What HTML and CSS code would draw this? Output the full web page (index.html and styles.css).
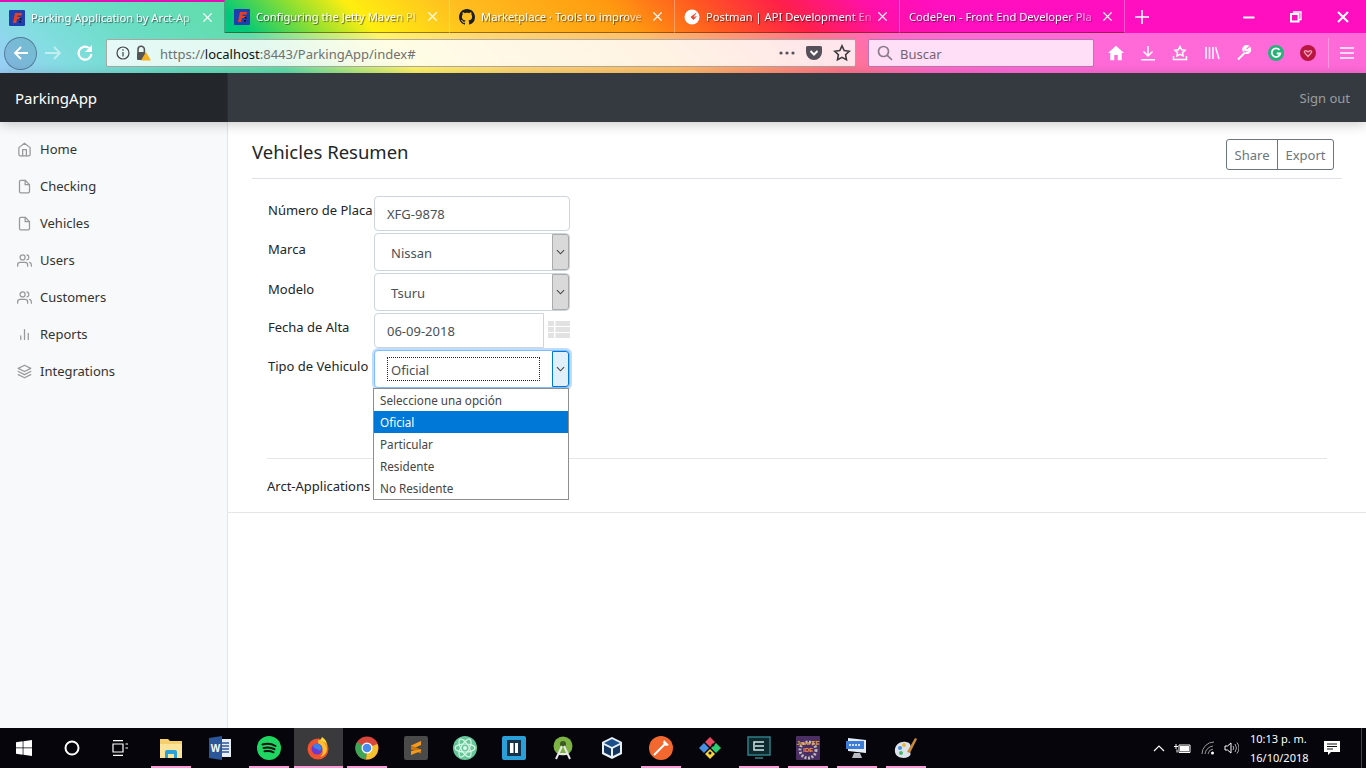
FILE: index.html
```html
<!DOCTYPE html>
<html lang="es">
<head>
<meta charset="utf-8">
<title>Parking Application by Arct-Applications</title>
<link rel="stylesheet" href="styles.css">
</head>
<body>
<header class="browser">
  <div class="tabstrip">
    <div class="tab tab-active">
      <svg class="favicon" viewBox="0 0 16 16"><rect width="16" height="16" rx="1" fill="#1f3fb0"/><path d="M4 13 6 3h7l-.5 2.500H8.600l-.3 1.600h3.200l-.4 2H7.900L7.200 13z" fill="#e8401f"/><path d="M10.500 8h2v1.500h-2zM10 11h2v1.500h-2z" fill="#111"/></svg>
      <span class="tab-title">Parking Application by Arct-Ap</span>
      <svg class="tab-close" viewBox="0 0 12 12"><path d="M1.500 1.500l9 9M10.500 1.500l-9 9"/></svg>
    </div>
    <div class="tab">
      <svg class="favicon" viewBox="0 0 16 16"><rect width="16" height="16" rx="1" fill="#1f3fb0"/><path d="M4 13 6 3h7l-.5 2.500H8.600l-.3 1.600h3.200l-.4 2H7.900L7.200 13z" fill="#e8401f"/><path d="M10.500 8h2v1.500h-2zM10 11h2v1.500h-2z" fill="#111"/></svg>
      <span class="tab-title">Configuring the Jetty Maven Pl</span>
      <svg class="tab-close" viewBox="0 0 12 12"><path d="M1.500 1.500l9 9M10.500 1.500l-9 9"/></svg>
    </div>
    <div class="tab">
      <svg class="favicon" viewBox="0 0 16 16"><path fill="#1b1f23" d="M8 0C3.580 0 0 3.580 0 8c0 3.540 2.290 6.530 5.470 7.590.4.070.55-.17.55-.38 0-.19-.01-.82-.01-1.490-2.010.37-2.530-.49-2.690-.94-.09-.23-.48-.94-.82-1.130-.28-.15-.68-.52-.01-.53.63-.01 1.080.58 1.230.82.72 1.210 1.870.87 2.330.66.07-.52.28-.87.51-1.070-1.780-.2-3.640-.89-3.640-3.950 0-.87.31-1.590.82-2.150-.08-.2-.36-1.020.08-2.120 0 0 .67-.21 2.200.82.64-.18 1.320-.27 2-.27.68 0 1.360.09 2 .27 1.530-1.040 2.200-.82 2.200-.82.44 1.100.16 1.920.08 2.120.51.56.82 1.270.82 2.150 0 3.070-1.870 3.750-3.650 3.950.29.25.54.73.54 1.480 0 1.070-.01 1.930-.01 2.200 0 .21.15.46.55.38A8.013 8.013 0 0016 8c0-4.420-3.580-8-8-8z"/></svg>
      <span class="tab-title">Marketplace · Tools to improve</span>
      <svg class="tab-close" viewBox="0 0 12 12"><path d="M1.500 1.500l9 9M10.500 1.500l-9 9"/></svg>
    </div>
    <div class="tab">
      <svg class="favicon" viewBox="0 0 16 16"><circle cx="8" cy="8" r="7.500" fill="#fff"/><path d="M13 3 6.500 8 9.500 11 13 7 9.500 8z" fill="#f0452f"/></svg>
      <span class="tab-title">Postman | API Development En</span>
      <svg class="tab-close" viewBox="0 0 12 12"><path d="M1.500 1.500l9 9M10.500 1.500l-9 9"/></svg>
    </div>
    <div class="tab tab-nofav">
      <span class="tab-title">CodePen - Front End Developer Pla</span>
      <svg class="tab-close" viewBox="0 0 12 12"><path d="M1.500 1.500l9 9M10.500 1.500l-9 9"/></svg>
    </div>
    <svg class="newtab" viewBox="0 0 14 14"><path d="M7 0v14M0 7h14"/></svg>
    <div class="winctl">
      <svg viewBox="0 0 12 12"><path d="M0 6.500h11.500" stroke-width="2"/></svg>
      <svg viewBox="0 0 12 12"><path d="M3.500 2.500V1h7.500v7.500H9" stroke-width="1.300"/><rect x="1" y="3" width="7.500" height="7.500" stroke-width="2"/></svg>
      <svg viewBox="0 0 12 12"><path d="M1 1l10 10M11 1L1 11" stroke-width="2"/></svg>
    </div>
  </div>
  <div class="toolbar">
    <div class="nav-back"><svg viewBox="0 0 18 18"><path d="M16 9H3M9 3 3 9l6 6"/></svg></div>
    <svg class="nav-icon nav-fwd" viewBox="0 0 18 18"><path d="M1 9h15M10 3l6 6-6 6"/></svg>
    <svg class="nav-icon nav-reload" viewBox="0 0 18 18"><path d="M15.500 10A6.500 6.500 0 1 1 13 4"/><path class="solid" d="M16 1v7h-7z"/></svg>
    <div class="urlbar">
      <svg class="url-info" viewBox="0 0 14 14"><circle cx="7" cy="7" r="6"/><path d="M7 6v4.500M7 3.200v1.600"/></svg>
      <svg class="url-lock" viewBox="0 0 16 16"><path d="M3 7V4.500a3.200 3.200 0 0 1 6.400 0V7" fill="none" stroke="#555" stroke-width="1.600"/><rect x="2" y="7" width="8.500" height="8" rx="1" fill="#555"/><path d="M11 7 16 15.500H6z" fill="#f5b324"/></svg>
      <span class="url-text">https://<b>localhost</b>:8443/ParkingApp/index#</span>
      <span class="url-spacer"></span>
      <svg class="url-dots" viewBox="0 0 16 4"><circle cx="2" cy="2" r="1.600"/><circle cx="8" cy="2" r="1.600"/><circle cx="14" cy="2" r="1.600"/></svg>
      <svg class="url-pocket" viewBox="0 0 16 14"><path d="M1.500 0h13A1.500 1.500 0 0 1 16 1.500V6a8 8 0 0 1-16 0V1.500A1.500 1.500 0 0 1 1.500 0z"/><path d="M4.500 5 8 8.500 11.500 5" class="pocket-v"/></svg>
      <svg class="url-star" viewBox="0 0 18 18"><path d="M9 1.800l2.200 4.700 5.100.7-3.700 3.500.9 5.100L9 13.400l-4.500 2.400.9-5.100L1.700 7.200l5.100-.7z"/></svg>
    </div>
    <div class="searchbar">
      <svg viewBox="0 0 16 16"><circle cx="6.500" cy="6.500" r="5"/><path d="M10.300 10.300 15 15"/></svg>
      <span class="search-text">Buscar</span>
    </div>
    <div class="tools">
      <svg viewBox="0 0 16 16"><path class="solid" d="M8 .8 0 8h2.300v7.200h4V10h3.400v5.200h4V8H16z"/></svg>
      <svg viewBox="0 0 16 16"><path d="M8 1v10M3.500 6.500 8 11l4.500-4.500M1 14.800h14"/></svg>
      <svg viewBox="0 0 16 16"><path d="M8 1.500l1.600 3.200 3.400.5-2.500 2.400.6 3.400L8 9.400l-3.100 1.600.6-3.400L3 5.200l3.400-.5zM1.500 11v3.500h13V11"/></svg>
      <svg viewBox="0 0 16 16"><path d="M2 2v12M5.500 2v12M9 2v12M11.500 2 15 14"/></svg>
      <svg viewBox="0 0 16 16"><path d="M2 14.500 9 7.500M9.500 7.800A3.400 3.400 0 0 0 13.800 3.200L11.500 5.500l-1.800-.4-.4-1.800 2.200-2.200A3.400 3.400 0 0 0 8 6.500" stroke-width="2"/></svg>
      <svg class="ext" viewBox="0 0 16 16"><circle cx="8" cy="8" r="8" fill="#25b37a"/><path d="M11.500 5A4.300 4.300 0 1 0 12.300 8.500H8.800" fill="none" stroke="#fff" stroke-width="1.800"/></svg>
      <svg class="ext" viewBox="0 0 16 16"><circle cx="8" cy="8" r="8" fill="#b7163f"/><path d="M8 11.500 4.500 7.500Q4 6 5.300 5.800 7 5.500 8 7q1-1.500 2.700-1.200Q12 6 11.500 7.500z" fill="none" stroke="#ff9db8" stroke-width="1.300"/></svg>
      <span class="tools-sep"></span>
      <svg class="tools-menu" viewBox="0 0 14 14"><path d="M0 2h14M0 7h14M0 12h14"/></svg>
    </div>
  </div>
</header>

<div class="topnav">
  <div class="brand">ParkingApp</div>
  <div class="signout">Sign out</div>
</div>

<div class="app">
  <nav class="sidebar">
    <div class="side-link"><svg viewBox="0 0 24 24"><path d="M3 9l9-7 9 7v11a2 2 0 0 1-2 2H5a2 2 0 0 1-2-2z"/><path d="M9 22V12h6v10"/></svg>Home</div>
    <div class="side-link"><svg viewBox="0 0 24 24"><path d="M13 2H6a2 2 0 0 0-2 2v16a2 2 0 0 0 2 2h12a2 2 0 0 0 2-2V9z"/><path d="M13 2v7h7"/></svg>Checking</div>
    <div class="side-link"><svg viewBox="0 0 24 24"><path d="M13 2H6a2 2 0 0 0-2 2v16a2 2 0 0 0 2 2h12a2 2 0 0 0 2-2V9z"/><path d="M13 2v7h7"/></svg>Vehicles</div>
    <div class="side-link"><svg viewBox="0 0 24 24"><path d="M17 21v-2a4 4 0 0 0-4-4H5a4 4 0 0 0-4 4v2"/><circle cx="9" cy="7" r="4"/><path d="M23 21v-2a4 4 0 0 0-3-3.870M16 3.130a4 4 0 0 1 0 7.750"/></svg>Users</div>
    <div class="side-link"><svg viewBox="0 0 24 24"><path d="M17 21v-2a4 4 0 0 0-4-4H5a4 4 0 0 0-4 4v2"/><circle cx="9" cy="7" r="4"/><path d="M23 21v-2a4 4 0 0 0-3-3.870M16 3.130a4 4 0 0 1 0 7.750"/></svg>Customers</div>
    <div class="side-link"><svg viewBox="0 0 24 24"><path d="M18 20V10M12 20V4M6 20v-6"/></svg>Reports</div>
    <div class="side-link"><svg viewBox="0 0 24 24"><path d="M12 2 2 7l10 5 10-5zM2 17l10 5 10-5M2 12l10 5 10-5"/></svg>Integrations</div>
  </nav>
  <main class="content">
    <div class="page-head">
      <h1>Vehicles Resumen</h1>
      <div class="btn-group"><span class="btn">Share</span><span class="btn">Export</span></div>
    </div>
    <form class="form">
      <div class="row row-input">
        <span class="lbl">Número de Placa</span>
        <div class="field">XFG-9878</div>
      </div>
      <div class="row row-select">
        <span class="lbl">Marca</span>
        <div class="select"><span class="select-value">Nissan</span><span class="arrow"><svg viewBox="0 0 10 6"><path d="M1 1l4 4 4-4"/></svg></span></div>
      </div>
      <div class="row row-select">
        <span class="lbl">Modelo</span>
        <div class="select"><span class="select-value">Tsuru</span><span class="arrow"><svg viewBox="0 0 10 6"><path d="M1 1l4 4 4-4"/></svg></span></div>
      </div>
      <div class="row row-input">
        <span class="lbl">Fecha de Alta</span>
        <div class="field field-date">06-09-2018</div>
        <svg class="cal" viewBox="0 0 22 17"><path d="M0 0h6v5H0zM7.500 0H22v5H7.500zM0 6h6v5H0zM7.500 6H22v5H7.500zM0 12h6v5H0zM7.500 12H22v5H7.500z"/></svg>
      </div>
      <div class="row row-select row-focus">
        <span class="lbl">Tipo de Vehiculo</span>
        <div class="select select-focus">
          <span class="select-value"><span class="focus-ring">Oficial</span></span>
          <span class="arrow"><svg viewBox="0 0 10 6"><path d="M1 1l4 4 4-4"/></svg></span>
          <ul class="dropdown">
            <li>Seleccione una opción</li>
            <li class="selected">Oficial</li>
            <li>Particular</li>
            <li>Residente</li>
            <li>No Residente</li>
          </ul>
        </div>
      </div>
    </form>
    <footer class="foot">Arct-Applications</footer>
  </main>
</div>

<div class="taskbar">
  <div class="tb-start">
    <div class="tb-slot0"><svg class="i16" viewBox="0 0 16 16"><path fill="#fff" d="M0 2.300 6.700 1.300V7.600H0zM7.400 1.200 16 0V7.600H7.400zM0 8.300H6.700V14.700L0 13.700zM7.400 8.300H16V16L7.400 14.800z"/></svg></div>
    <div class="tb-slot0"><svg class="i16" viewBox="0 0 16 16"><circle cx="8" cy="8" r="6.500" fill="none" stroke="#fff" stroke-width="2"/></svg></div>
    <div class="tb-slot0"><svg class="i16" viewBox="0 0 16 16"><path fill="none" stroke="#fff" stroke-width="1.200" d="M1 .6h10M1 15.400h10M1 4h10v8H1zM13.500 4H16M13.500 8H16"/></svg></div>
  </div>
  <div class="tb-apps">
    <div class="tb-app run"><svg viewBox="0 0 24 24"><path d="M1 3h8l2 2h12v15H1z" fill="#f5cf6b"/><path d="M1 8h22v14H1z" fill="#fbe39a"/><path d="M6 22v-6a2 2 0 0 1 2-2h8a2 2 0 0 1 2 2v6h-3v-4H9v4z" fill="#2a9fd8"/></svg></div>
    <div class="tb-app"><svg viewBox="0 0 24 24"><path d="M8 3h15v18H8z" fill="#e8edf5"/><path d="M14 7h7M14 10h7M14 13h7M14 16h7" stroke="#2b579a" stroke-width="1.500"/><path d="M1 2 14 0v24L1 22z" fill="#2b579a"/><text x="7.500" y="16" class="word-w">W</text></svg></div>
    <div class="tb-app run"><svg viewBox="0 0 24 24"><circle cx="12" cy="12" r="12" fill="#1ed760"/><path d="M5.500 8.500q7-2 13 1.500M6.500 12q6-1.500 11 1.200M7.500 15.300q5-1 9 1" fill="none" stroke="#111" stroke-width="2" stroke-linecap="round"/></svg></div>
    <div class="tb-app active"><svg viewBox="0 0 24 24"><circle cx="12" cy="13" r="10.500" fill="#f0532d"/><path d="M12 4a9 9 0 0 1 9 9 9 9 0 0 1-7 8c4-3 3-7 1-9-1-2-3-3-3-8z" fill="#ffbf2e"/><circle cx="11" cy="13" r="5.500" fill="#6a3bd0"/><path d="M7 9q4-3 7 0t0 6l-3-2-3-1z" fill="#3f7fe8"/><path d="M16 1q5 3 5 9-2-5-7-5z" fill="#ffd83a"/></svg></div>
    <div class="tb-app run"><svg viewBox="0 0 24 24"><circle cx="12" cy="12" r="11.500" fill="#d9473c"/><path d="M12 12 22.500 8A11.500 11.500 0 0 1 11 23.500z" fill="#f4c22f"/><path d="M12 12 11 23.500A11.500 11.500 0 0 1 2 6z" fill="#3fa556"/><circle cx="12" cy="12" r="5.500" fill="#fff"/><circle cx="12" cy="12" r="4.300" fill="#4a8bf0"/></svg></div>
    <div class="tb-app"><svg viewBox="0 0 24 24"><rect width="24" height="24" rx="2" fill="#4a4a4a"/><path d="M7 9.500 17 5v4L7 13.500z" fill="#f59b1c"/><path d="M7 9.500 17 13.500v4L7 13.500z" fill="#c9760f"/><path d="M7 15 17 13.500v1.500L7 19z" fill="#f59b1c"/></svg></div>
    <div class="tb-app"><svg viewBox="0 0 24 24"><circle cx="12" cy="12" r="12" fill="#66c79a"/><g fill="none" stroke="#d9f7e6" stroke-width="1.200"><ellipse cx="12" cy="12" rx="10" ry="4" transform="rotate(60 12 12)"/><ellipse cx="12" cy="12" rx="10" ry="4" transform="rotate(-60 12 12)"/><ellipse cx="12" cy="12" rx="10" ry="4"/></g><circle cx="12" cy="12" r="2" fill="#d9f7e6"/></svg></div>
    <div class="tb-app"><svg viewBox="0 0 24 24"><rect width="24" height="24" rx="2" fill="#2a9fd8"/><rect x="5" y="4" width="14" height="16" fill="#14334a"/><path d="M8 7h3.500v10H8zM13 7h3v10h-3z" fill="#fff"/></svg></div>
    <div class="tb-app"><svg viewBox="0 0 24 24"><circle cx="12" cy="10" r="9.500" fill="#7cb342"/><circle cx="12" cy="8" r="3" fill="#3d5a22"/><path d="M11 10 5 23M13 10l6 13M7 18h10" stroke="#e8e8e8" stroke-width="2" fill="none"/></svg></div>
    <div class="tb-app"><svg viewBox="0 0 24 24"><path d="M12 1 22 6v12l-10 5L2 18V6z" fill="#e8f0f8"/><path d="M12 3 20 7l-8 4-8-4z" fill="#1b4f8c"/><path d="M4 9l7 3.500V20l-7-3.500zM20 9l-7 3.500V20l7-3.500z" fill="#14365f"/></svg></div>
    <div class="tb-app run"><svg viewBox="0 0 24 24"><circle cx="12" cy="12" r="12" fill="#f2682f"/><path d="M5 19 17 7" stroke="#fff" stroke-width="2"/><path d="M15 4l5 5-3 1-3-3z" fill="#fff"/></svg></div>
    <div class="tb-app"><svg viewBox="0 0 24 24"><path d="M12 1 17 6 12 11 7 6z" fill="#e84a5f"/><path d="M1 12 6 7 11 12 6 17z" fill="#4a90e2"/><path d="M23 12 18 7 13 12 18 17z" fill="#2ecc71"/><path d="M12 23 17 18 12 13 7 18z" fill="#f5d442"/><circle cx="15" cy="9" r="1.500" fill="#111"/><circle cx="12" cy="17" r="1.500" fill="#111"/></svg></div>
    <div class="tb-app run"><svg viewBox="0 0 24 24"><rect x="1" y="1" width="22" height="18" fill="#0e2a2e" stroke="#2f7f86" stroke-width="1.500"/><path d="M17 6H7v8h10M8 10h9" fill="none" stroke="#cfe6e8" stroke-width="1.500"/><path d="M8 22h8" stroke="#2f7f86" stroke-width="1.500"/></svg></div>
    <div class="tb-app run"><svg viewBox="0 0 24 24"><rect width="24" height="24" rx="1" fill="#4b2e63"/><circle cx="12" cy="14" r="8" fill="none" stroke="#bbb" stroke-width="3" stroke-dasharray="2 1.500"/><text x="12" y="9" class="jee">Java EE</text><text x="12" y="16" class="jee">IDE</text></svg></div>
    <div class="tb-app run"><svg viewBox="0 0 24 24"><path d="M3 2 21 4v13L3 15z" fill="#e6edf5"/><path d="M1 5h18v8H1z" fill="#3b7dd8"/><path d="M4 9h12" stroke="#cfe3ff" stroke-width="2" stroke-dasharray="2 1"/><path d="M9 17h6l2 5H7z" fill="#b8bcc2"/></svg></div>
    <div class="tb-app run"><svg viewBox="0 0 24 24"><path d="M12 6C5 5 0 10 1 16s9 7 13 5 2-4 2-6 3-8-4-9z" fill="#dde3ea"/><circle cx="6" cy="12" r="2" fill="#4a90e2"/><circle cx="10" cy="9" r="2" fill="#e8b93c"/><circle cx="7" cy="17" r="2" fill="#4bb56e"/><path d="M13 16 21 2l2 1-7 14z" fill="#c98a3a"/></svg></div>
  </div>
  <div class="tray">
    <svg class="tray-caret" viewBox="0 0 12 7"><path d="M1 6l5-5 5 5"/></svg>
    <svg class="tray-batt" viewBox="0 0 17 11"><path d="M5 2h11v7.500H5zM0 3.500h4M2 1v5M3 6.500v3" fill="none" stroke="#fff"/><path d="M6 3h9v5.500H6z" fill="#fff"/></svg>
    <svg class="tray-wifi" viewBox="0 0 15 14"><path d="M1 13A12 12 0 0 1 13 1M4 13a9 9 0 0 1 8-8M7 13a6 6 0 0 1 5-5" fill="none" stroke="#9a9a9a"/><circle cx="11.500" cy="12" r="1.500" fill="#fff"/></svg>
    <svg class="tray-vol" viewBox="0 0 15 14"><path d="M1 5h2.500L7 2v10L3.500 9H1z" fill="none" stroke="#fff"/><path d="M9 5q1.500 2 0 4M11 3q3 4 0 8M13 1.500q4 5.500 0 11" fill="none" stroke="#aaa"/></svg>
    <div class="clock"><span>10:13 p. m.</span><span>16/10/2018</span></div>
    <svg class="tray-note" viewBox="0 0 16 16"><path d="M0 1h16v11H7l-3 3v-3H0z" fill="#fff"/><path d="M3 4h10M3 6.500h10M3 9h6" stroke="#111"/></svg>
    <span class="tray-desktop"></span>
  </div>
</div>
</body>
</html>
```
FILE: styles.css
```css
* { box-sizing: border-box; }
html, body { margin: 0; height: 768px; overflow: hidden; }
body {
  width: 1366px;
  display: flex;
  flex-direction: column;
  font-family: "Noto Sans", "Open Sans", sans-serif;
  font-size: 13px;
  color: #212529;
  background: #fff;
}

/* Browser chrome */
.browser {
  height: 73px;
  flex: none;
  background: linear-gradient(45deg, #5fb0f5 0, #38c8d0 5%, #10c8a0 12%, #00c878 20%, #90e030 25%, #ffee10 29%, #ffc020 36%, #ff9a10 47%, #ff5a20 53%, #ff2048 59%, #ff10a8 65%, #ff0fc0 70%);
}
.tabstrip { height: 33px; display: flex; align-items: stretch; }
.tab {
  width: 225px;
  display: flex;
  align-items: center;
  padding: 1px 11px 0 9px;
  border-right: 1px solid rgba(255,255,255,.3);
  border-bottom: 1px solid rgba(80,40,0,.55);
  color: #fff;
}
.tab-active {
  padding-top: 0;
  border-top: 2px solid #e40fb4;
  border-bottom: 0;
  border-right: 1px solid rgba(0,0,0,.25);
  background: rgba(255,255,255,.38);
}
.favicon { width: 16px; height: 16px; flex: none; margin-right: 6px; }
.tab-title {
  flex: 1;
  min-width: 0;
  overflow: hidden;
  white-space: nowrap;
  font-size: 11.200px;
  line-height: 16px;
  text-shadow: 1px 1px 1px rgba(0,0,0,.55);
  -webkit-mask-image: linear-gradient(to right, #000 86%, rgba(0,0,0,.25) 100%);
  mask-image: linear-gradient(to right, #000 86%, rgba(0,0,0,.25) 100%);
}
.tab-close { width: 11px; height: 11px; flex: none; margin-left: 5px; fill: none; stroke: #fff; stroke-width: 1.500; }
.newtab { width: 14px; height: 14px; align-self: center; margin-left: 10px; fill: none; stroke: #fff; stroke-width: 1.600; }
.winctl { margin-left: auto; display: flex; align-items: center; padding-right: 17px; gap: 35px; }
.winctl svg { width: 12px; height: 12px; fill: none; stroke: #fff; overflow: visible; }

.toolbar {
  height: 40px;
  display: flex;
  align-items: center;
  padding-left: 4px;
  background: rgba(255,255,255,.38);
}
.nav-back {
  width: 33px;
  height: 33px;
  flex: none;
  border-radius: 50%;
  border: 1px solid rgba(60,80,110,.6);
  background: rgba(70,110,160,.28);
  display: flex;
  align-items: center;
  justify-content: center;
}
.nav-back svg { width: 18px; height: 18px; fill: none; stroke: #fff; stroke-width: 1.800; }
.nav-icon { width: 18px; height: 18px; flex: none; fill: none; stroke: #fff; stroke-width: 1.800; }
.nav-icon .solid { fill: #fff; stroke: none; }
.nav-fwd { margin-left: 7px; opacity: .5; }
.nav-reload { margin-left: 14px; stroke-width: 2.200; }
.urlbar {
  width: 750px;
  height: 28px;
  flex: none;
  margin-left: 12px;
  display: flex;
  align-items: center;
  padding: 0 4px 0 9px;
  background: rgba(255,255,255,.82);
  border: 1px solid rgba(90,70,60,.45);
  border-radius: 2px;
  color: #707070;
}
.url-info { width: 14px; height: 14px; flex: none; fill: none; stroke: #444; stroke-width: 1.200; }
.url-lock { width: 16px; height: 16px; flex: none; margin-left: 5px; }
.url-text { margin-left: 9px; padding-top: 1px; font-size: 13px; white-space: nowrap; }
.url-text b { font-weight: 400; color: #111; }
.url-spacer { flex: 1; }
.url-dots { width: 16px; height: 4px; fill: #55505a; }
.url-pocket { width: 16px; height: 14px; margin-left: 11px; fill: #55505a; }
.pocket-v { fill: none; stroke: #fff; stroke-width: 2; }
.url-star { width: 18px; height: 18px; margin-left: 11px; fill: none; stroke: #3e3a40; stroke-width: 1.600; }
.searchbar {
  width: 226px;
  height: 28px;
  flex: none;
  margin-left: 12px;
  display: flex;
  align-items: center;
  padding-left: 8px;
  gap: 7px;
  background: #ffdff8;
  border: 1px solid rgba(140,50,120,.6);
  border-radius: 2px;
  color: #75636f;
  font-size: 13px;
}
.search-text { padding-top: 1px; }
.searchbar svg { width: 16px; height: 16px; fill: none; stroke: #8a7c88; stroke-width: 1.700; }
.tools { flex: 1; height: 100%; display: flex; align-items: center; padding-left: 14px; }
.tools svg { width: 16px; height: 16px; flex: none; margin-right: 16px; fill: none; stroke: #fff; stroke-width: 1.500; }
.tools .solid { fill: #fff; stroke: none; }
.tools .ext { stroke: none; }
.tools-sep { width: 1px; height: 30px; margin-left: -4px; background: rgba(255,255,255,.3); flex: none; }
.tools svg.tools-menu { width: 14px; height: 14px; margin: 0 0 0 11px; stroke-width: 1.700; }

/* Application navbar */
.topnav {
  height: 49px;
  flex: none;
  display: flex;
  align-items: center;
  background: #343a40;
  box-shadow: 0 2px 12px rgba(0,0,0,.22);
  position: relative;
  z-index: 2;
}
.brand {
  width: 228px;
  height: 100%;
  display: flex;
  align-items: center;
  padding-left: 15px;
  background: #23272b;
  color: #fff;
  font-size: 15px;
  border-right: 1px solid #2a2e33;
}
.signout { margin-left: auto; padding-right: 16px; color: rgba(255,255,255,.5); font-size: 13px; }

.app { flex: 1; min-height: 0; display: flex; }
.sidebar {
  width: 228px;
  flex: none;
  padding-top: 8.500px;
  background: #f8f9fa;
  border-right: 1px solid #e4e5e6;
}
.side-link {
  height: 37px;
  display: flex;
  align-items: center;
  padding-left: 17px;
  color: #333;
  font-size: 13px;
}
.side-link svg {
  width: 15px;
  height: 15px;
  margin-right: 8px;
  fill: none;
  stroke: #999;
  stroke-width: 2;
  stroke-linecap: round;
  stroke-linejoin: round;
}

.content { flex: 1; height: 391px; border-bottom: 1px solid #e6e6e6; display: flex; flex-direction: column; }
.page-head {
  height: 57px;
  flex: none;
  margin: 0 24px;
  padding-top: 17px;
  display: flex;
  justify-content: space-between;
  align-items: flex-start;
  border-bottom: 1px solid #dee2e6;
}
.page-head h1 { margin: 0; font-size: 18.500px; font-weight: 400; line-height: 26px; }
.btn-group { display: flex; margin-right: 8px; }
.btn {
  height: 31px;
  padding: 0 7.500px;
  display: flex;
  align-items: center;
  border: 1px solid #6c757d;
  color: #6c757d;
  font-size: 13px;
}
.btn:first-child { border-radius: 3px 0 0 3px; }
.btn:last-child { border-radius: 0 3px 3px 0; margin-left: -1px; }

.form { margin: 17px 0 0 40px; width: 302px; height: 262px; flex: none; }
.row { display: flex; align-items: flex-start; }
.lbl { width: 106px; flex: none; line-height: 20px; white-space: nowrap; }
.row-input { height: 37px; }
.row-input .lbl { padding-top: 4px; }
.row-select { height: 40px; }
.row-select .lbl { padding-top: 6px; }
.field {
  width: 196px;
  height: 35px;
  padding: 0 12px;
  display: flex;
  align-items: center;
  border: 1px solid #ced4da;
  border-radius: 4px;
  color: #495057;
}
.field-date { width: 170px; border-radius: 4px 0 0 4px; }
.cal { width: 22px; height: 17px; margin: 8px 0 0 4px; fill: #e2e2e2; }
.select {
  width: 196px;
  height: 38px;
  position: relative;
  display: flex;
  border: 1px solid #ced4da;
  border-radius: 4px;
  background: #fff;
  color: #495057;
}
.select-value { flex: 1; display: flex; align-items: center; padding: 2px 12px 0 16px; }
.arrow {
  width: 17px;
  flex: none;
  display: flex;
  align-items: center;
  justify-content: center;
  background: #d9d9d9;
  border: 1px solid #aaa;
  border-radius: 0 3px 3px 0;
}
.arrow svg { width: 9px; height: 6px; fill: none; stroke: #444; stroke-width: 1.200; }
.select-focus { border-color: #80bdff; box-shadow: 0 0 0 2px rgba(0,123,255,.25); }
.select-focus .select-value { padding: 0 12px; }
.focus-ring { flex: 1; height: 24px; display: flex; align-items: center; padding: 2px 0 0 3px; border: 1px dotted #222; }
.select-focus .arrow { background: #e1effa; border-color: #0078d7; }
.dropdown {
  position: absolute;
  left: -2px;
  top: 37px;
  width: 196px;
  margin: 0;
  padding: 0;
  list-style: none;
  background: #fff;
  border: 1px solid #8e8e8e;
  z-index: 3;
  font-size: 11.700px;
  color: #444;
}
.dropdown li { height: 22px; line-height: 22px; padding-left: 6px; }
.dropdown .selected { background: #0078d7; color: #fff; }
.foot {
  margin: 0 39px;
  padding-top: 17px;
  height: 54px;
  border-top: 1px solid #e6e6e6;
  color: #212529;
  line-height: 20px;
}

/* Windows taskbar */
.taskbar {
  height: 40px;
  flex: none;
  display: flex;
  align-items: stretch;
  background: #05050b;
  position: relative;
  z-index: 4;
}
.tb-start { width: 146.500px; display: flex; flex: none; }
.tb-slot0 { width: 48px; display: flex; align-items: center; justify-content: center; }
.i16 { width: 16px; height: 16px; }
.tb-apps { display: flex; }
.tb-app {
  width: 49px;
  display: flex;
  align-items: center;
  justify-content: center;
}
.tb-app svg { width: 24px; height: 24px; }
.tb-app.run { background: linear-gradient(#ff9ad8, #ff9ad8) center bottom / 40px 2px no-repeat; }
.tb-app.active { background: linear-gradient(#ff9ad8, #ff9ad8) center bottom / 100% 2px no-repeat, #3a3a3c; }
.word-w { font: 700 10px "Liberation Sans", sans-serif; fill: #fff; text-anchor: middle; }
.jee { font: 700 6px "Liberation Sans", sans-serif; fill: #e8a33c; text-anchor: middle; }
.tray { margin-left: auto; display: flex; align-items: center; color: #fff; }
.tray-caret { width: 12px; height: 7px; fill: none; stroke: #fff; stroke-width: 1.100; }
.tray-batt { width: 17px; height: 11px; margin-left: 9px; }
.tray-wifi { width: 15px; height: 14px; margin-left: 10px; }
.tray-vol { width: 15px; height: 14px; margin-left: 8px; }
.clock { display: flex; flex-direction: column; align-items: flex-start; margin-left: 11px; font-size: 11px; line-height: 19px; width: 56px; white-space: nowrap; }
.tray-note { width: 16px; height: 16px; margin-left: 18px; }
.tray-desktop { width: 1px; height: 100%; margin-left: 21px; margin-right: 4px; background: #444; }
```
